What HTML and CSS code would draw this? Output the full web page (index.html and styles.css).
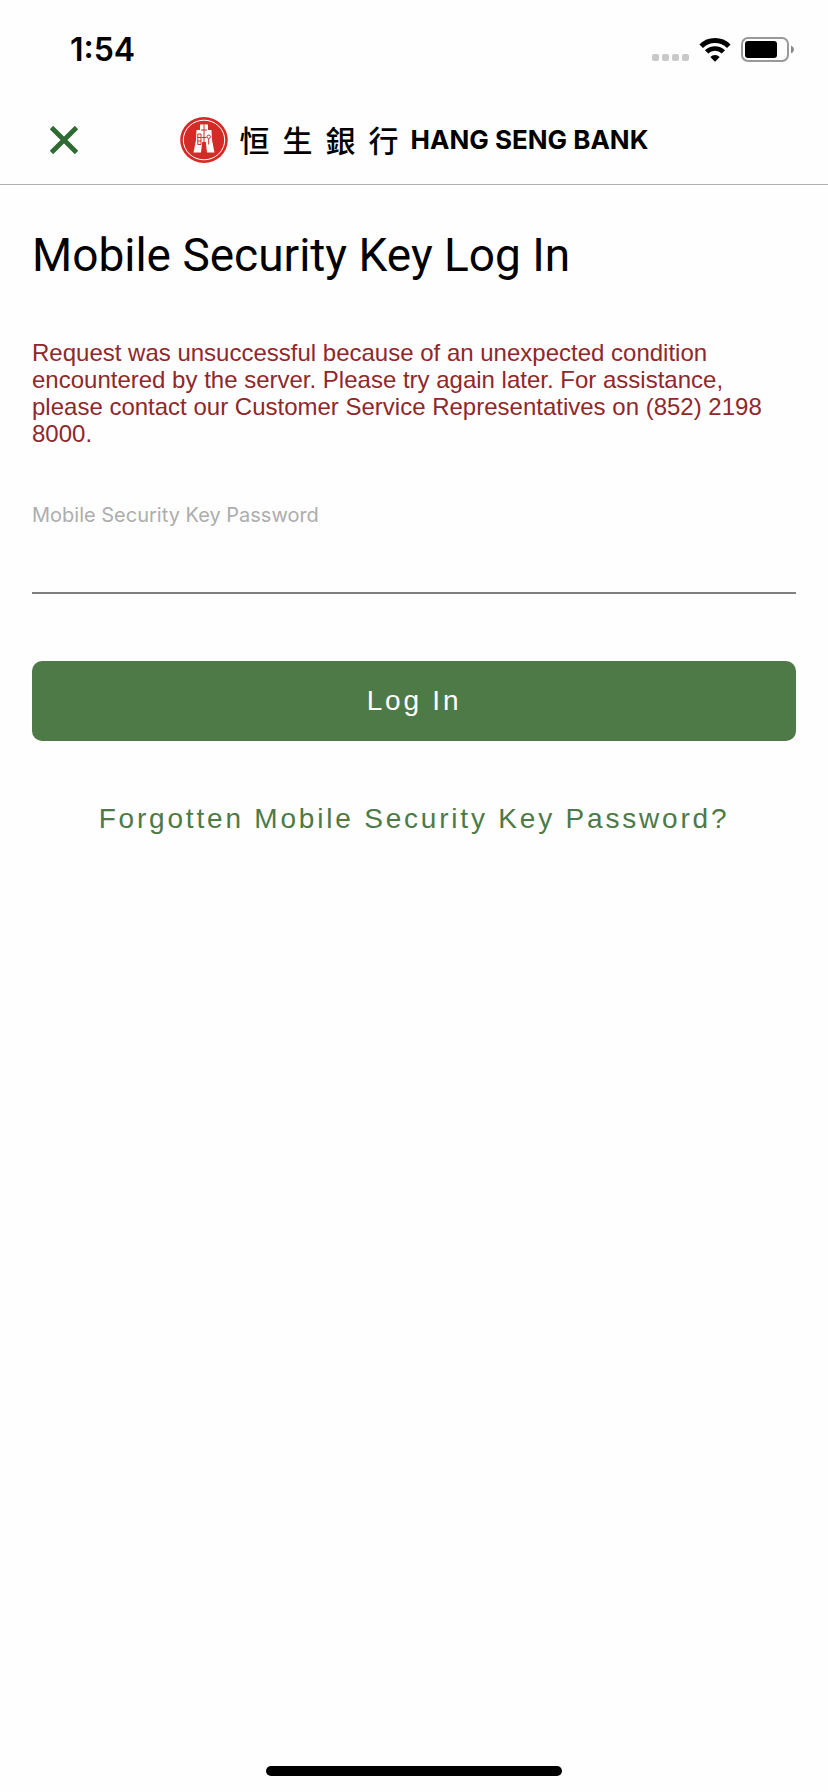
FILE: index.html
```html
<!DOCTYPE html>
<html lang="en">
<head>
<meta charset="utf-8">
<meta name="viewport" content="width=device-width, initial-scale=1">
<title>Mobile Security Key Log In</title>
<link rel="stylesheet" href="styles.css">
</head>
<body>
<div class="screen">
  <div class="status-bar">
    <span class="time">1:54</span>
    <div class="indicators">
      <span class="signal"><i></i><i></i><i></i><i></i></span>
      <svg class="wifi" width="32" height="26" viewBox="0 0 32 26" aria-hidden="true">
        <path d="M2.200 9.200A19.500 19.500 0 0 1 29.800 9.200" fill="none" stroke="#000" stroke-width="5"/>
        <path d="M7.600 14.900A11.900 11.900 0 0 1 24.400 14.900" fill="none" stroke="#000" stroke-width="4.600"/>
        <path d="M16 24.800L11.300 20A6.600 6.600 0 0 1 20.700 20Z"/>
      </svg>
      <svg class="battery" width="54" height="26" viewBox="0 0 54 26" aria-hidden="true">
        <rect x="1" y="1" width="46" height="23" rx="6" fill="none" stroke="#999" stroke-width="2"/>
        <rect x="4" y="4" width="32" height="17" rx="3"/>
        <path d="M50 8.500Q53 10 53 12.500T50 16.500Z" fill="#888"/>
      </svg>
    </div>
  </div>

  <header class="header">
    <button class="close" type="button" aria-label="Close">
      <svg width="28" height="28" viewBox="0 0 28 28" aria-hidden="true">
        <path d="M1.500 1.500L26.500 26.500M26.500 1.500L1.500 26.500" stroke="#2f6b33" stroke-width="4.800"/>
      </svg>
    </button>
    <div class="brand">
      <svg class="emblem" width="48" height="46" viewBox="0 0 48 46" aria-hidden="true">
        <ellipse cx="24" cy="23" rx="23.800" ry="22.900" fill="#d52b27"/>
        <ellipse cx="24" cy="23" rx="20.700" ry="19.800" fill="none" stroke="#fff"/>
        <path d="M20 7.500H28V13H31.500L32 23L34.500 35.500H27L25.800 25H22.200L21 35.500H13.500L16 23L16.500 13H20Z" fill="#fff"/>
        <path d="M24 7.500V25M21 13H27M21.500 20.500H26.500M17.800 17H21V27.500H17.800ZM17.800 20.500H21M17.800 24H21M28.700 22V27.500" fill="none" stroke="#d52b27"/>
        <circle cx="28.700" cy="19.800" r="1.700" fill="none" stroke="#d52b27"/>
      </svg>
      <span class="brand-zh" lang="zh-Hant"><span>恒</span><span>生</span><span>銀</span><span>行</span></span>
      <span class="brand-en">HANG SENG BANK</span>
    </div>
  </header>

  <main class="content">
    <h1 class="title">Mobile Security Key Log In</h1>
    <p class="error" role="alert">Request was unsuccessful because of an unexpected condition encountered by the server. Please try again later. For assistance, please contact our Customer Service Representatives on (852) 2198 8000.</p>
    <form class="form">
      <label class="label" for="password">Mobile Security Key Password</label>
      <input class="input" id="password" type="password">
      <button class="submit" type="submit">Log In</button>
    </form>
    <a class="forgotten" href="#">Forgotten Mobile Security Key Password?</a>
  </main>

  <div class="home-indicator"></div>
</div>
</body>
</html>
```
FILE: styles.css
```css
* {
  box-sizing: border-box;
}

body {
  margin: 0;
  background: #fefefe;
  color: #000;
  font-family: "Liberation Sans", Arial, sans-serif;
}

.screen {
  display: flex;
  flex-direction: column;
  min-height: 100vh;
}

.status-bar {
  display: flex;
  justify-content: space-between;
  align-items: center;
  height: 96px;
  padding: 4px 33px 0 70px;
}

.time {
  font: 600 32px/40px Inter, sans-serif;
}

.indicators {
  display: flex;
  align-items: flex-end;
  gap: 10px;
}

.signal {
  display: flex;
  gap: 3px;
  padding-bottom: 2px;
}

.signal i {
  width: 7px;
  height: 7px;
  border-radius: 2px;
  background: #c9c9c9;
}

.wifi,
.battery,
.emblem,
.close svg {
  display: block;
}

.header {
  display: grid;
  grid-template-columns: 1fr auto 1fr;
  align-items: center;
  height: 89px;
  border-bottom: 1px solid #b0b0b0;
}

.close {
  justify-self: start;
  margin-left: 38px;
  padding: 12px;
  border: 0;
  background: none;
}

.brand {
  display: flex;
  align-items: center;
  gap: 12px;
}

.brand-zh {
  display: flex;
  gap: 13px;
  padding-bottom: 2px;
  font: 500 30px/40px "Noto Sans CJK TC", sans-serif;
}

.brand-en {
  font: 700 26px/40px Inter, sans-serif;
}

.content {
  flex: 1;
  padding: 40px 32px;
}

.title {
  margin: 0;
  font: 400 46px/60px Roboto, sans-serif;
}

.error {
  margin: 54px 0 0;
  color: #8f282b;
  font-size: 24px;
  line-height: 27px;
}

.form {
  display: flex;
  flex-direction: column;
  margin-top: 54px;
}

.label {
  color: #adadad;
  font: 400 20px/28px Inter, sans-serif;
}

.input {
  width: 100%;
  height: 65px;
  padding: 0;
  border: 0;
  border-bottom: 2px solid #808080;
  border-radius: 0;
  background: none;
  font-size: 28px;
  outline: 0;
}

.submit {
  height: 80px;
  margin-top: 67px;
  border: 0;
  border-radius: 10px;
  background: #4d7a46;
  color: #fff;
  font-family: inherit;
  font-size: 28px;
  letter-spacing: 0.1em;
}

.forgotten {
  display: block;
  margin-top: 62px;
  color: #4d7a46;
  font-size: 28px;
  line-height: 32px;
  letter-spacing: 0.1em;
  text-align: center;
  text-decoration: none;
}

.home-indicator {
  width: 296px;
  height: 10px;
  margin: 0 auto 16px;
  border-radius: 5px;
  background: #000;
}
```
